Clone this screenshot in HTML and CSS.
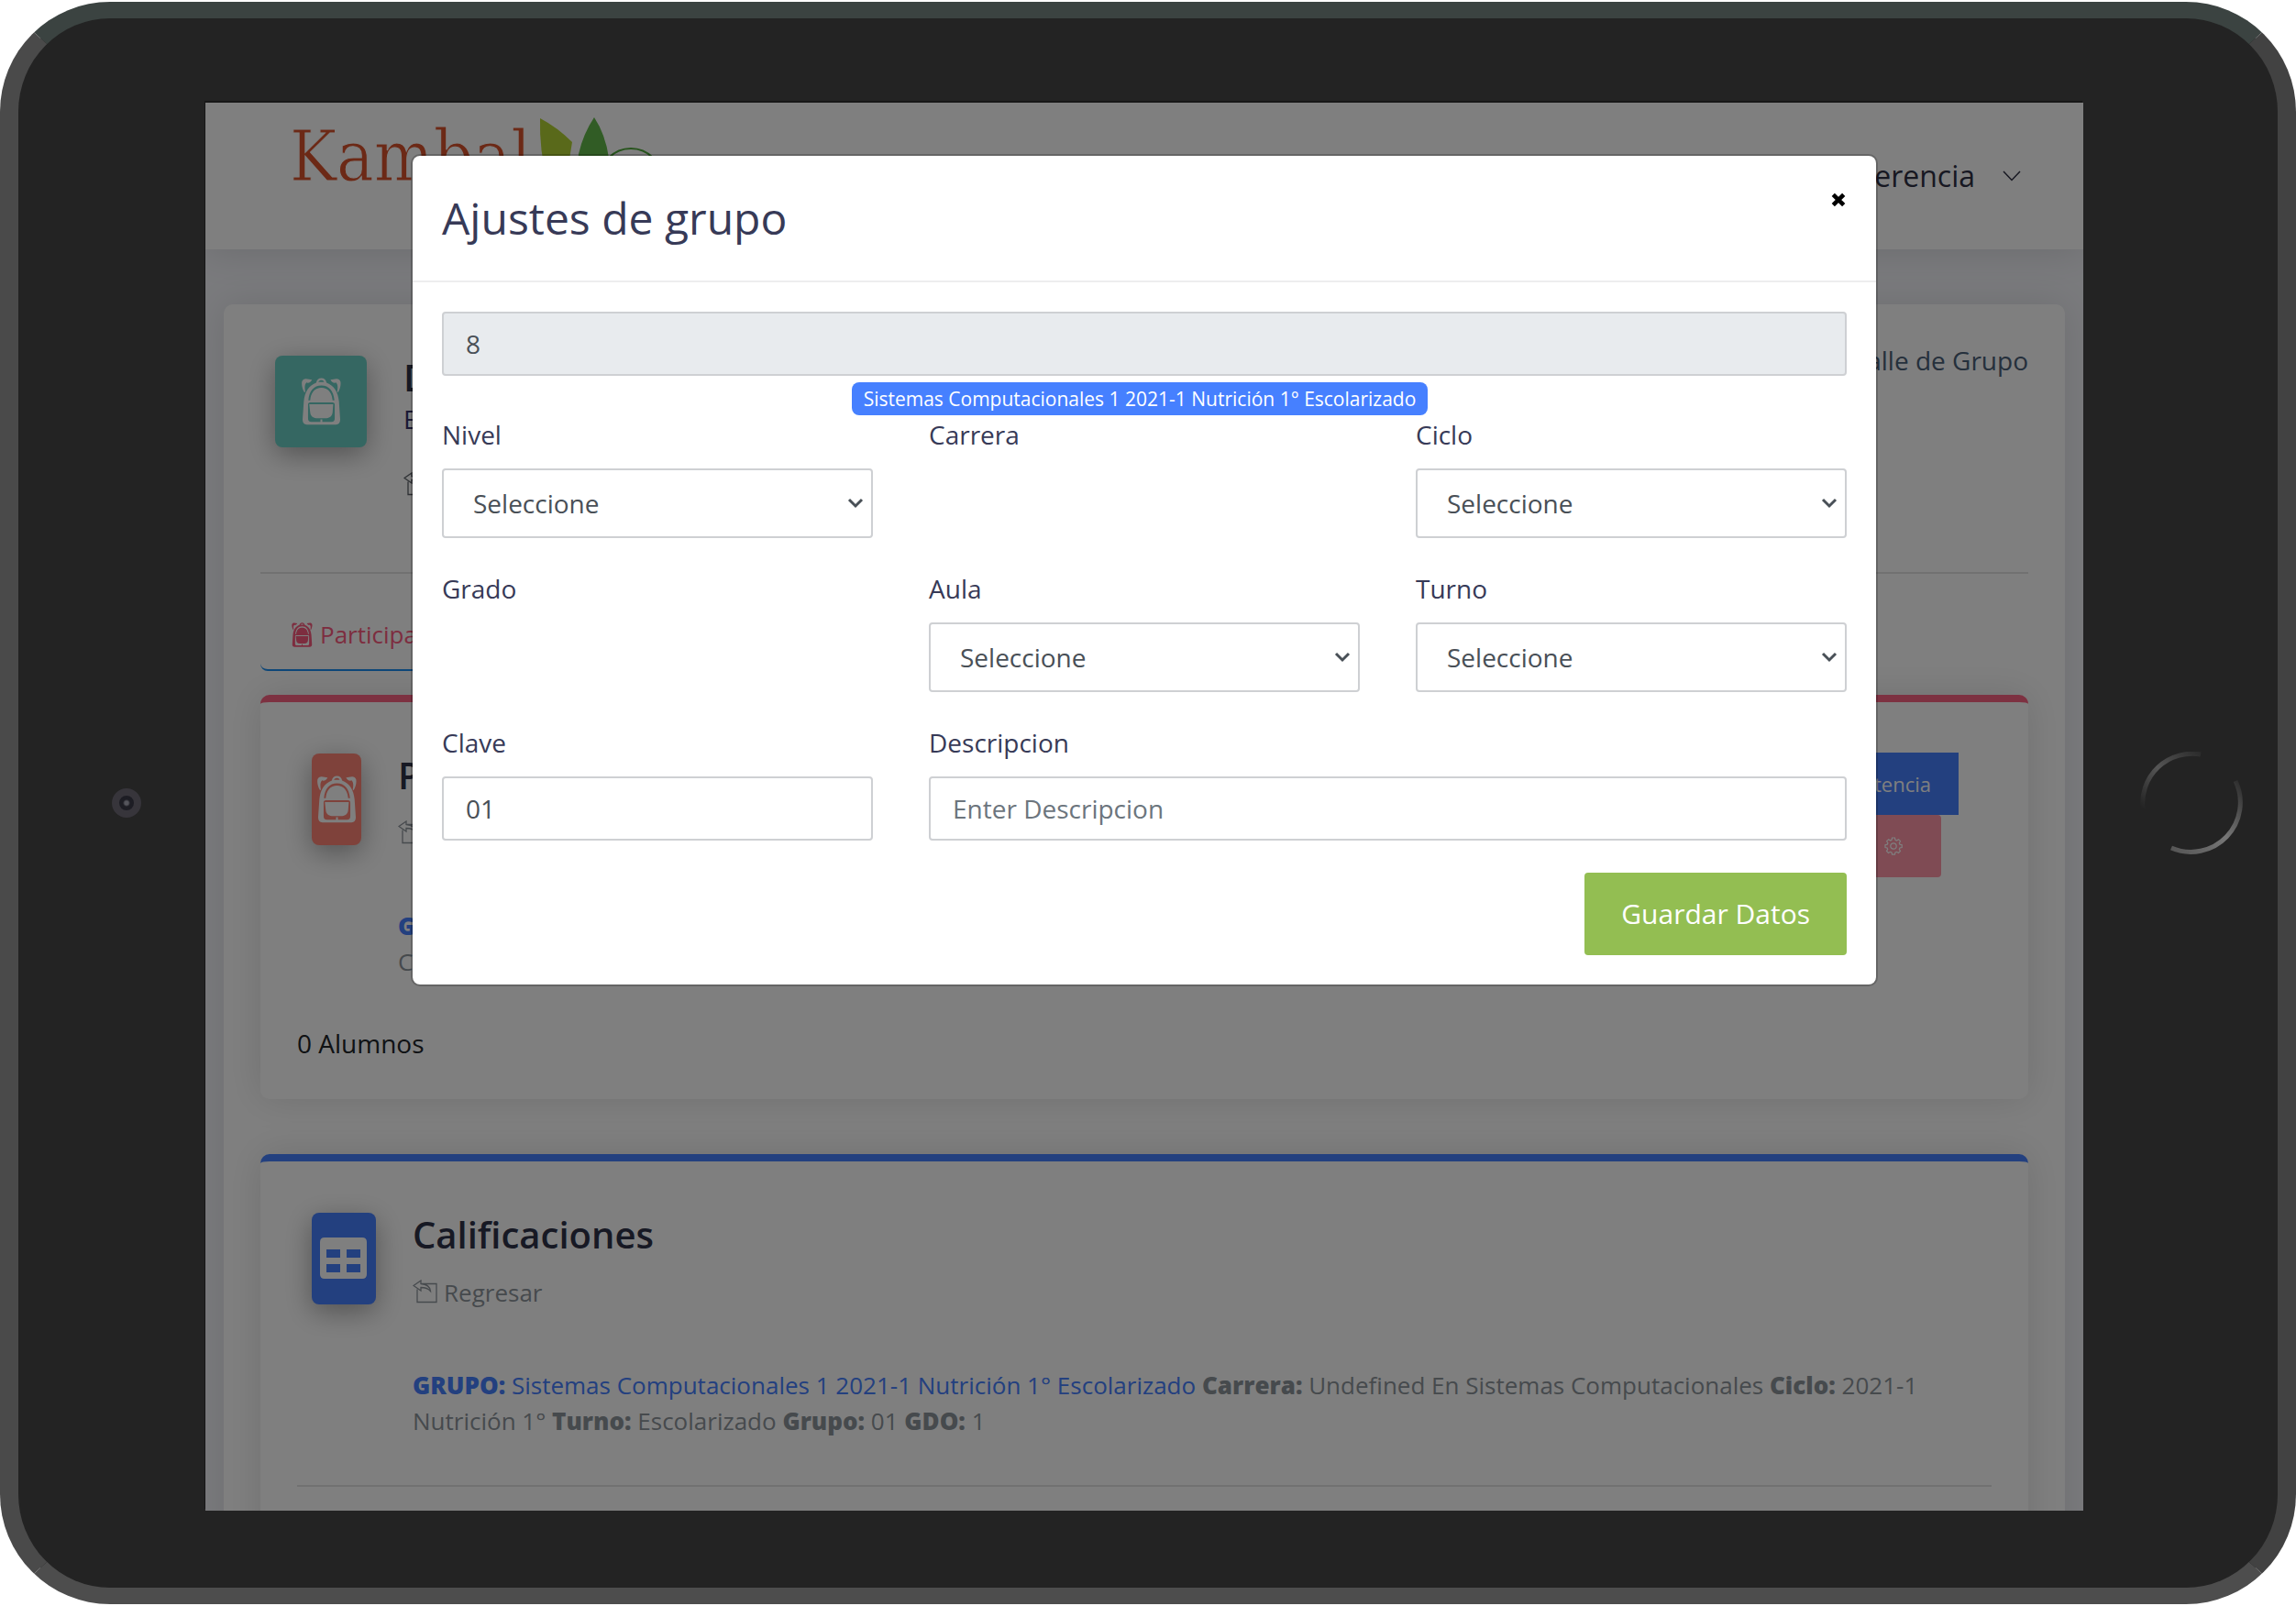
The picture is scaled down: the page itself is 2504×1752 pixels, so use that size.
FILE: index.html
```html
<!DOCTYPE html>
<html lang="es">
<head>
<meta charset="utf-8">
<meta name="viewport" content="width=device-width, initial-scale=1">
<title>Kambal - Ajustes de grupo</title>
<link rel="stylesheet" href="styles.css">
</head>
<body>
<svg class="defs" aria-hidden="true">
  <symbol id="backpack" viewBox="115 92 130 156">
    <path fill="currentColor" d="M116 104c2-6 7-9 13-9l20 3c-2 6-8 10-14 11l-4-2c-6 6-7 15-4 31l-3 2c-7-12-10-25-8-36zM243 104c-2-6-7-9-13-9l-20 3c2 6 8 10 14 11l4-2c6 6 7 15 4 31l3 2c7-12 10-25 8-36z"/>
    <path fill="currentColor" fill-rule="evenodd" d="M163 108c2-10 8-15 17-15s15 5 17 15c26 10 38 32 41 62l4 60c0 10-5 16-14 16h-96c-9 0-14-6-14-16l4-60c3-30 15-52 41-62zM170 106h19c-2-4-5-6-9-6s-8 2-10 6zM137 166h6c3-26 16-41 37-41s34 15 37 41h6c-3-31-18-49-43-49s-40 18-43 49zM144 173c-6 0-8 3-8 8v44c0 8 3 12 11 12h30v-8h6v8h30c8 0 11-4 11-12v-44c0-5-2-8-8-8z"/>
    <path fill="currentColor" d="M145 165c2-25 14-38 35-38s33 13 35 38zM140 179h79l-2 26c-1 12-8 19-20 20h-34c-12-1-19-8-20-20z"/>
  </symbol>
  <symbol id="back" viewBox="0 0 28 26">
    <path fill="none" stroke="currentColor" stroke-width="1.3" d="M10 4.500H26V24.500H5V10.500M1 6.500 9 1V4.500C15 5 19 8 19.500 12.500 17 9.500 13 8.500 9 8.500V12Z"/>
  </symbol>
</svg>

<div class="device">
  <span class="side-key side-key-left"></span>
  <span class="side-key side-key-right"></span>
  <div class="bezel bezel-left"><span class="camera"></span></div>

  <div class="screen">
    <header class="topbar">
      <div class="brand">
        <span class="brand-name">Kambal</span>
        <svg class="brand-leaves" viewBox="0 0 130 72" aria-hidden="true">
          <path fill="#b2d335" d="M1 1Q20 11 36 27L29 70H9Q0 36 1 1Z"/>
          <path fill="#62b84a" d="M60 0Q72 18 76 44 78 62 70 71H46Q40 58 43 40 48 18 60 0Z"/>
          <circle cx="100" cy="68" r="34" fill="none" stroke="#4fa83a" stroke-width="2"/>
        </svg>
      </div>
      <button class="user-menu" type="button">Gerencia
        <svg width="20" height="12" viewBox="0 0 20 12" aria-hidden="true"><path d="M1 1 10 10.500 19 1" fill="none" stroke="currentColor" stroke-width="1.500"/></svg>
      </button>
    </header>

    <main class="page">
      <section class="panel">
        <div class="panel-head">
          <div class="tile tile-teal"><svg class="pack"><use href="#backpack"/></svg></div>
          <div class="head-text">
            <h1>Detalle</h1>
            <p class="subtitle">Escolarizado</p>
            <a class="back dark" href="#"><svg class="back-icon"><use href="#back"/></svg>Regresar</a>
          </div>
          <a class="crumb" href="#">Detalle de Grupo</a>
        </div>
        <hr>
        <nav class="tabs">
          <a class="tab" href="#"><svg class="tab-icon"><use href="#backpack"/></svg>Participantes</a>
        </nav>

        <section class="card card-red">
          <div class="card-head">
            <div class="tile tile-coral"><svg class="pack"><use href="#backpack"/></svg></div>
            <div class="head-text">
              <h2>Participantes</h2>
              <a class="back" href="#"><svg class="back-icon"><use href="#back"/></svg>Regresar</a>
              <p class="details"><b class="blue">GRUPO:</b><br>Computacionales</p>
            </div>
            <div class="actions">
              <button class="btn btn-blue" type="button">Asistencia</button>
              <button class="btn btn-pink" type="button" aria-label="Ajustes">
                <svg width="20" height="20" viewBox="0 0 20 20" fill="none" stroke="currentColor" stroke-width="1.200" aria-hidden="true">
                  <path d="M8.500 1h3l.5 2.300 1.500.7 2-1.300 2 2-1.200 2 .6 1.500 2.300.5v2.800l-2.300.5-.6 1.500 1.200 2-2 2-2-1.200-1.500.6-.5 2.300h-3l-.5-2.300-1.500-.6-2 1.200-2-2 1.200-2-.6-1.500L1 11.500V8.700l2.300-.5.600-1.500-1.200-2 2-2 2 1.300L8 3.300Z"/>
                  <circle cx="10" cy="10" r="3.200"/>
                </svg>
              </button>
            </div>
          </div>
          <p class="count">0 Alumnos</p>
        </section>

        <section class="card card-blue">
          <div class="card-head">
            <div class="tile tile-blue">
              <svg width="52" height="46" viewBox="0 0 52 46" aria-hidden="true"><path fill="currentColor" fill-rule="evenodd" d="M5 0H46Q51 0 51 5V40Q51 45 46 45H5Q0 45 0 40V5Q0 0 5 0ZM7 13V22H22V13ZM29 13V22H44V13ZM7 29V38H22V29ZM29 29V38H44V29Z"/></svg>
            </div>
            <div class="head-text">
              <h2>Calificaciones</h2>
              <a class="back" href="#"><svg class="back-icon"><use href="#back"/></svg>Regresar</a>
              <p class="details"><span class="blue"><b>GRUPO:</b> Sistemas Computacionales 1 2021-1 Nutrición 1° Escolarizado</span> <b>Carrera:</b> Undefined En Sistemas Computacionales <b>Ciclo:</b> 2021-1 Nutrición 1° <b>Turno:</b> Escolarizado <b>Grupo:</b> 01 <b>GDO:</b> 1</p>
            </div>
          </div>
          <hr>
        </section>
      </section>
    </main>

    <div class="backdrop">
      <div class="modal" role="dialog" aria-labelledby="modal-title">
        <div class="modal-head">
          <h2 class="modal-title" id="modal-title">Ajustes de grupo</h2>
          <button class="close" type="button" aria-label="Cerrar">
            <svg width="16" height="16" viewBox="0 0 14 14" aria-hidden="true"><path d="M2 2 12 12M12 2 2 12" stroke="currentColor" stroke-width="4"/></svg>
          </button>
        </div>
        <form class="modal-body">
          <input class="control" type="text" value="8" aria-label="Id" disabled>
          <div class="badge-row"><span class="badge">Sistemas Computacionales 1 2021-1 Nutrición 1° Escolarizado</span></div>
          <div class="fields">
            <div class="field">
              <label for="nivel">Nivel</label>
              <div class="select"><select id="nivel"><option>Seleccione</option></select><svg class="arrow" viewBox="0 0 18 12"><path d="M2 2 9 9 16 2"/></svg></div>
            </div>
            <div class="field"><span class="label">Carrera</span></div>
            <div class="field">
              <label for="ciclo">Ciclo</label>
              <div class="select"><select id="ciclo"><option>Seleccione</option></select><svg class="arrow" viewBox="0 0 18 12"><path d="M2 2 9 9 16 2"/></svg></div>
            </div>
            <div class="field"><span class="label">Grado</span></div>
            <div class="field">
              <label for="aula">Aula</label>
              <div class="select"><select id="aula"><option>Seleccione</option></select><svg class="arrow" viewBox="0 0 18 12"><path d="M2 2 9 9 16 2"/></svg></div>
            </div>
            <div class="field">
              <label for="turno">Turno</label>
              <div class="select"><select id="turno"><option>Seleccione</option></select><svg class="arrow" viewBox="0 0 18 12"><path d="M2 2 9 9 16 2"/></svg></div>
            </div>
            <div class="field">
              <label for="clave">Clave</label>
              <input class="control" id="clave" type="text" value="01">
            </div>
            <div class="field wide">
              <label for="descripcion">Descripcion</label>
              <input class="control" id="descripcion" type="text" placeholder="Enter Descripcion">
            </div>
          </div>
          <button class="save" type="submit">Guardar Datos</button>
        </form>
      </div>
    </div>
  </div>

  <div class="bezel bezel-right">
    <svg class="home" width="112" height="112" viewBox="0 0 112 112" fill="none" aria-hidden="true">
      <defs>
        <linearGradient id="arc-a" x1="0" y1="1" x2="1" y2="0"><stop offset="0" stop-color="#232323"/><stop offset=".5" stop-color="#555"/><stop offset="1" stop-color="#2c2c2c"/></linearGradient>
        <linearGradient id="arc-b" x1="1" y1="0" x2="0" y2="1"><stop offset="0" stop-color="#2c2c2c"/><stop offset=".5" stop-color="#777"/><stop offset="1" stop-color="#555"/></linearGradient>
      </defs>
      <path d="M3 62A54 54 0 0 1 66 3" stroke="url(#arc-a)" stroke-width="5"/>
      <path d="M104 32A54 54 0 0 1 34 105" stroke="url(#arc-b)" stroke-width="5"/>
    </svg>
  </div>
</div>
</body>
</html>
```
FILE: styles.css
```css
* {
  box-sizing: border-box;
}

body {
  margin: 0;
  background: #fff;
  font: 28px/42px "Open Sans", "Noto Sans", sans-serif;
  color: #212529;
}

h1, h2, p {
  margin: 0;
}

button, input, select {
  font: inherit;
}

a {
  color: inherit;
  text-decoration: none;
}

svg {
  flex: none;
}

.defs {
  display: none;
}

/* Tablet frame */
.device {
  position: relative;
  display: grid;
  grid-template-columns: 204px minmax(0, 1fr) 212px;
  height: calc(100vh - 4px);
  margin-top: 2px;
  overflow: hidden;
  background: #232323;
  border: 20px solid #424242;
  border-color: #3b4341 #424242 #4d4d4d #4a4a4a;
  border-width: 18px 20px;
  border-radius: 120px;
}

.bezel {
  display: flex;
  align-items: center;
}

.bezel-left {
  padding-left: 102px;
}

.bezel-right {
  padding-left: 62px;
}

.camera {
  width: 32px;
  height: 32px;
  border: 8px solid #37353b;
  border-radius: 50%;
  background: radial-gradient(#55555c 0 2px, #1d1d24 4px);
}

.side-key {
  position: absolute;
  width: 14px;
  height: 70px;
  background: linear-gradient(#c4c6c6, #8a8a8a 60%, #4a4a4a);
}

.side-key-left {
  top: 424px;
  left: -20px;
  border-radius: 0 8px 0 0;
}

.side-key-right {
  right: -20px;
  bottom: 390px;
  border-radius: 8px 0 0 0;
}

.screen {
  position: relative;
  margin: 92px 0 84px;
  overflow: hidden;
  background: #f4f5fa;
  box-shadow: -1px -2px 0 #171717;
}

/* Page */
.topbar {
  display: flex;
  justify-content: space-between;
  height: 160px;
  padding: 16px 68px 0 92px;
  background: #fff;
  box-shadow: 0 2px 40px rgba(0, 0, 0, .12);
}

.brand {
  display: flex;
}

.brand-name {
  color: #d8532c;
  font: 76px/86px "DejaVu Serif Condensed", "DejaVu Serif", serif;
  -webkit-text-stroke: 1px #fff;
}

.brand-leaves {
  width: 130px;
  height: 72px;
  margin-left: 9px;
}

.user-menu {
  display: flex;
  align-items: center;
  align-self: flex-start;
  gap: 30px;
  padding: 40px 0 0;
  border: 0;
  background: none;
  color: #2f3044;
  font-size: 32px;
  line-height: 48px;
}

.page {
  padding: 60px 20px;
}

.panel {
  padding: 40px;
  background: #fff;
  border-radius: 10px;
  box-shadow: 0 0 40px rgba(0, 0, 0, .1);
}

.panel-head, .card-head {
  display: flex;
}

.tile {
  display: flex;
  flex: none;
  align-items: center;
  justify-content: center;
  height: 100px;
  margin: 16px 40px 0 16px;
  border-radius: 8px;
  color: #fff;
  box-shadow: 0 8px 30px rgba(0, 0, 0, .35);
}

.tile-teal {
  width: 100px;
  background: #6bcfc4;
}

.tile-coral {
  width: 54px;
  background: #ff8577;
}

.tile-blue {
  width: 70px;
  background: #4680ff;
}

.pack {
  width: 43px;
  height: 52px;
}

.head-text {
  flex: 1;
  padding-top: 16px;
}

h1, h2 {
  color: #2f3249;
  font-size: 40px;
  font-weight: 600;
  line-height: 48px;
}

.subtitle {
  color: #34336b;
}

.back {
  display: flex;
  align-items: center;
  gap: 6px;
  margin-top: 20px;
  color: #8d949b;
  font-size: 26px;
  line-height: 39px;
}

.dark {
  margin-top: 32px;
  margin-bottom: 3px;
  color: #5c6168;
}

.back-icon {
  width: 28px;
  height: 26px;
  margin-bottom: 4px;
}

.crumb {
  color: #4b6078;
}

hr {
  height: 2px;
  margin: 72px 0 0;
  border: 0;
  background: #e3e3e3;
}

.tabs {
  display: flex;
  margin: 28px 0 26px;
}

.tab {
  display: flex;
  align-items: center;
  gap: 8px;
  width: 420px;
  padding: 18px 34px;
  border-bottom: 2px solid #1a8df0;
  border-radius: 8px;
  color: #fb5b7e;
  font-size: 26px;
  line-height: 40px;
}

.tab-icon {
  width: 23px;
  height: 27px;
}

.card {
  margin-bottom: 60px;
  padding: 40px;
  background: #fff;
  border-top: 8px solid;
  border-radius: 10px;
  box-shadow: 0 0 40px rgba(0, 0, 0, .12);
}

.card-red {
  border-top-color: #fb6382;
}

.card-blue {
  border-top-color: #4680ff;
}

.card hr {
  margin: 50px 0;
}

.details {
  margin-top: 62px;
  color: #8d949b;
  font-size: 26px;
  line-height: 39px;
}

.details b {
  font-weight: 800;
}

.blue {
  color: #4680ff;
}

.count {
  margin-top: 48px;
}

.actions {
  display: flex;
  flex-direction: column;
  align-items: flex-end;
  padding: 15px 36px 0 0;
}

.btn {
  display: flex;
  align-items: center;
  height: 68px;
  border: 0;
  color: #fff;
  font-size: 22px;
}

.btn-blue {
  padding: 0 30px;
  background: #4680ff;
}

.btn-pink {
  margin-right: 19px;
  padding: 0 42px;
  border-radius: 4px;
  background: #ff96a8;
}

/* Modal */
.backdrop {
  position: absolute;
  inset: 0;
  display: flex;
  align-items: flex-start;
  justify-content: center;
  padding-top: 56px;
  background: rgba(0, 0, 0, .5);
}

.modal {
  width: 1600px;
  max-width: 90%;
  background: #fff;
  background-clip: padding-box;
  border: 2px solid rgba(0, 0, 0, .2);
  border-radius: 10px;
}

.modal-head {
  display: flex;
  align-items: flex-start;
  justify-content: space-between;
  padding: 32px;
  border-bottom: 2px solid #ededee;
}

.modal-title {
  color: #373a57;
  font-size: 48px;
  font-weight: 400;
  line-height: 72px;
}

.close {
  display: flex;
  padding: 8px 1px;
  border: 0;
  background: none;
  color: #000;
}

.modal-body {
  display: flex;
  flex-direction: column;
  padding: 32px;
}

.control, select {
  width: 100%;
  height: 70px;
  padding: 0 24px;
  border: 2px solid #ced0d3;
  border-radius: 4px;
  background: #fff;
  color: #495057;
}

.control::placeholder {
  color: #6c757d;
}

.control:disabled {
  background: #e8ebee;
}

.badge-row {
  display: flex;
  justify-content: center;
  padding: 7px 10px 0 0;
}

.badge {
  padding: 0 13px;
  border-radius: 8px;
  background: #4680ff;
  color: #fff;
  font-size: 21px;
  font-weight: 500;
  line-height: 36px;
}

.fields {
  display: grid;
  grid-template-columns: repeat(3, minmax(0, 1fr));
  gap: 34px 61px;
}

.field {
  display: flex;
  flex-direction: column;
  gap: 16px;
  color: #373a57;
}

.wide {
  grid-column: span 2;
}

.select {
  display: grid;
  align-items: center;
}

.select > * {
  grid-area: 1 / 1;
}

select {
  height: 76px;
  padding: 0 32px;
  appearance: none;
}

.arrow {
  width: 18px;
  height: 12px;
  margin-right: 10px;
  justify-self: end;
  fill: none;
  stroke: #495057;
  stroke-width: 3;
  pointer-events: none;
}

.save {
  align-self: flex-end;
  height: 90px;
  margin-top: 35px;
  padding: 0 40px;
  border: 0;
  border-radius: 4px;
  background: #93be52;
  color: #fff;
  font-size: 30px;
}
```
